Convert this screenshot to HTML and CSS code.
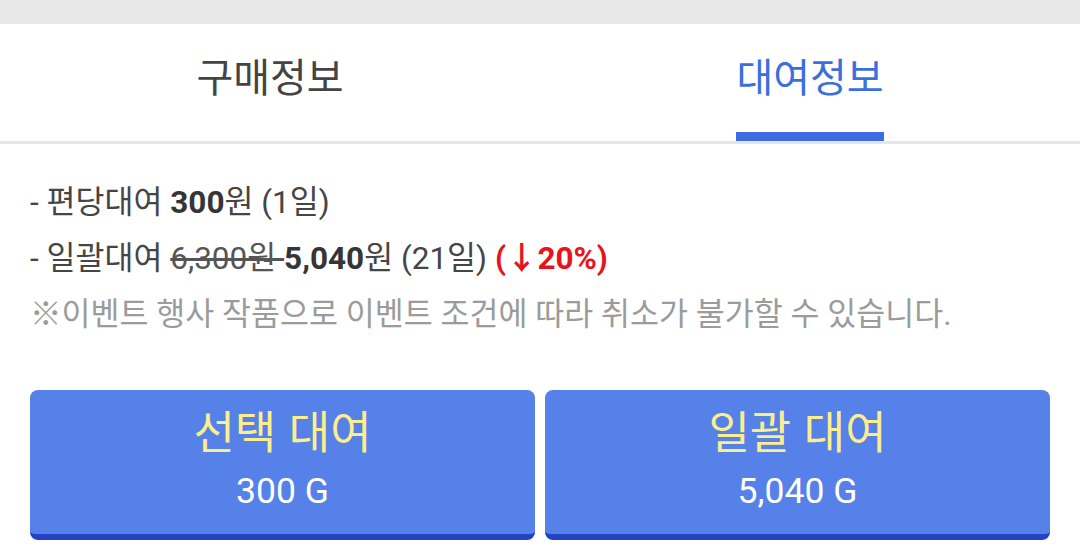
FILE: index.html
```html
<!DOCTYPE html>
<html lang="ko">
<head>
<meta charset="utf-8">
<link rel="stylesheet" href="styles.css">
</head>
<body>
<div class="topstrip"></div>
<nav class="tabs">
  <div class="tab"><span class="tab-label">구매정보</span></div>
  <div class="tab active"><span class="tab-label">대여정보</span></div>
</nav>
<section class="info">
  <p class="line">- 편당대여 <b>300</b>원 (1일)</p>
  <p class="line">- 일괄대여 <s>6,300원 </s><b>5,040</b>원 (21일) <b class="discount">(↓20%)</b></p>
  <p class="line note">※이벤트 행사 작품으로 이벤트 조건에 따라 취소가 불가할 수 있습니다.</p>
</section>
<div class="buttons">
  <button class="btn"><span class="btn-title">선택 대여</span><span class="btn-price">300 G</span></button>
  <button class="btn"><span class="btn-title">일괄 대여</span><span class="btn-price">5,040 G</span></button>
</div>
</body>
</html>
```

FILE: styles.css
```css
* { box-sizing: border-box; }
html, body {
  margin: 0;
  padding: 0;
  background: #ffffff;
  font-family: Roboto, "Noto Sans CJK KR", sans-serif;
  width: 1080px;
  height: 558px;
  overflow: hidden;
}
.topstrip {
  height: 24px;
  background: #e8e8e8;
}
.tabs {
  display: flex;
  height: 120px;
  border-bottom: 3px solid #e6e6e6;
}
.tab {
  flex: 1;
  display: flex;
  justify-content: center;
}
.tab-label {
  display: flex;
  align-items: center;
  height: 117px;
  padding-bottom: 6px;
  font-size: 40px;
  color: #444444;
  border-bottom: 9px solid transparent;
  font-family: "Noto Sans CJK KR", sans-serif;
}
.tab.active .tab-label {
  color: #3c6fde;
  border-bottom-color: #3d6ce0;
}
.info {
  padding: 31px 30px 0;
}
.line {
  margin: 0;
  font-size: 31.5px;
  line-height: 56px;
  color: #454545;
  white-space: nowrap;
}
.line b {
  color: #353535;
  font-weight: 700;
}
.line s {
  color: #555555;
}
.line b.discount {
  color: #e8141c;
}
.note {
  color: #9b9b9b;
}
.buttons {
  display: flex;
  gap: 10px;
  padding: 47px 30px 0;
}
.btn {
  flex: 1;
  height: 150px;
  border: none;
  border-bottom: 6px solid #2342c4;
  border-radius: 8px;
  background: #5681e8;
  display: flex;
  flex-direction: column;
  align-items: center;
  justify-content: center;
  gap: 11px;
  padding: 0 0 9px;
  font-family: Roboto, "Noto Sans CJK KR", sans-serif;
}
.btn-title {
  font-family: "Noto Sans CJK KR", sans-serif;
  font-size: 45px;
  line-height: 56px;
  color: #fdee8c;
}
.btn-price {
  font-size: 35.5px;
  line-height: 44px;
  color: #ffffff;
}
```
